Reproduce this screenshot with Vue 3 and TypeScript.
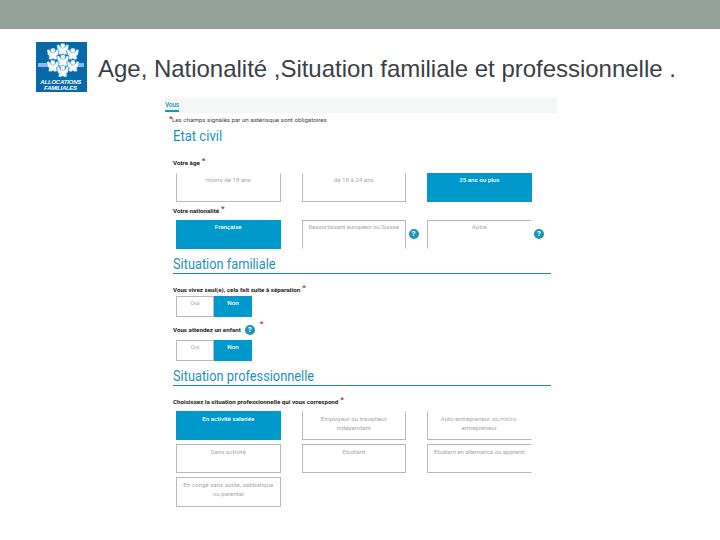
<script setup lang="ts">
interface Choice {
  label: string;
  active?: boolean;
  help?: boolean;
  // Sides of the outline that are not drawn, e.g. 'top right'.
  open?: string;
  // Long label squeezed onto a single line.
  tight?: boolean;
}

interface Question {
  label: string;
  // Space above the label line, and the height of the line itself.
  gap: number;
  height: number;
  help?: boolean;
  toggle?: boolean;
  roomy?: boolean;
  rows: Choice[][];
}

interface Section {
  title: string;
  ruled: boolean;
  questions: Question[];
}

const sections: Section[] = [
  {
    title: 'Etat civil',
    ruled: false,
    questions: [
      {
        label: 'Votre âge',
        gap: 5,
        height: 20,
        rows: [[
          { label: 'moins de 18 ans', open: 'top' },
          { label: 'de 18 à 24 ans', open: 'top' },
          { label: '25 ans ou plus', active: true },
        ]],
      },
      {
        label: 'Votre nationalité',
        gap: 0,
        height: 18,
        rows: [[
          { label: 'Française', active: true },
          { label: 'Ressortissant européen ou Suisse', open: 'bottom', help: true, tight: true },
          { label: 'Autre', open: 'bottom right', help: true },
        ]],
      },
    ],
  },
  {
    title: 'Situation familiale',
    ruled: true,
    questions: [
      {
        label: 'Vous vivez seul(e), cela fait suite à séparation',
        gap: 10,
        height: 12,
        toggle: true,
        rows: [[{ label: 'Oui' }, { label: 'Non', active: true }]],
      },
      {
        label: 'Vous attendez un enfant',
        gap: 2,
        height: 21,
        help: true,
        toggle: true,
        rows: [[{ label: 'Oui' }, { label: 'Non', active: true }]],
      },
    ],
  },
  {
    title: 'Situation professionnelle',
    ruled: true,
    questions: [
      {
        label: 'Choisissez la situation professionnelle qui vous correspond',
        gap: 7,
        height: 18,
        roomy: true,
        rows: [
          [
            { label: 'En activité salariée', active: true },
            { label: 'Employeur ou travailleur indépendant', open: 'top' },
            { label: 'Auto-entrepreneur ou micro-entrepreneur', open: 'top right' },
          ],
          [
            { label: 'Sans activité' },
            { label: 'Etudiant' },
            { label: 'Etudiant en alternance ou apprenti', open: 'right', tight: true },
          ],
          [{ label: 'En congé sans solde, sabbatique ou parental' }],
        ],
      },
    ],
  },
];

function choiceClasses(choice: Choice): string[] {
  const classes = (choice.open ?? '').split(' ').filter(Boolean).map((side) => `open-${side}`);
  if (choice.active) classes.push('active');
  if (choice.tight) classes.push('tight');
  return classes;
}

// Centres of the seven small figures of the logo: six around one.
const figures = [
  [26.8, 6.8],
  [17, 11.6],
  [36.8, 11.6],
  [16.8, 23.6],
  [37, 23.6],
  [26.8, 29],
  [26.9, 18],
];
</script>

<template>
  <div class="slide">
    <div class="band"></div>
    <header class="head">
      <svg class="logo" viewBox="0 0 51 50" role="img" aria-label="Allocations familiales">
        <rect width="51" height="50" fill="#0669a8" />
        <rect x="2" y="21" width="46" height="4" fill="#8db8ea" />
        <g fill="#f4fbff" stroke="#3f8cc0" stroke-width="0.35">
          <g v-for="([x, y], i) in figures" :key="i" :transform="`translate(${x} ${y}) scale(1.08)`">
            <path d="M-5.600-3.400L-3.600-4L-2.200-1.600H2.200L3.600-4L5.600-3.400L4.700 1.400L3.400 2L4 5L1.600 5.600L0 4.600L-1.600 5.600L-4 5L-3.400 2L-4.700 1.400Z" />
            <circle cx="0" cy="-2.900" r="2.300" />
          </g>
        </g>
        <g fill="#fff" font-family="Liberation Sans, sans-serif" font-weight="700" font-style="italic" font-size="6" text-anchor="middle">
          <text x="24.800" y="41.800" textLength="41">ALLOCATIONS</text>
          <text x="24.600" y="47.700" textLength="33">FAMILIALES</text>
        </g>
      </svg>
      <h1>Age, Nationalité ,Situation familiale et professionnelle .</h1>
    </header>

    <main class="form">
      <nav class="tabs"><span class="tab">Vous</span></nav>
      <p class="notice"><span class="star">*</span>Les champs signalés par un astérisque sont obligatoires</p>

      <section v-for="s in sections" :key="s.title" class="section" :class="{ ruled: s.ruled }">
        <h2><span>{{ s.title }}</span></h2>
        <div v-for="q in s.questions" :key="q.label" class="question">
          <div class="label" :style="{ marginTop: q.gap + 'px', height: q.height + 'px' }">
            <span>{{ q.label }}</span>
            <i v-if="q.help" class="help">?</i>
            <span class="star" :class="{ raised: q.help }">*</span>
          </div>
          <div v-for="(row, r) in q.rows" :key="r" class="row" :class="{ toggle: q.toggle, roomy: q.roomy }">
            <div v-for="c in row" :key="c.label" class="cell">
              <button type="button" class="choice" :class="choiceClasses(c)">{{ c.label }}</button>
              <i v-if="c.help" class="help">?</i>
            </div>
          </div>
        </div>
      </section>
    </main>
  </div>
</template>

<style>
body {
  background: #fff;
}
</style>

<style scoped>
.slide {
  width: 720px;
  height: 540px;
  overflow: hidden;
  background: #fff;
  font-family: Roboto, "Liberation Sans", sans-serif;
}
.band {
  height: 29px;
  box-sizing: border-box;
  background: #93a299;
  border-bottom: 1px solid #999d97;
}
.head {
  display: flex;
  height: 69px;
  padding: 13px 0 0 36px;
  box-sizing: border-box;
}
.logo {
  width: 51px;
  height: 50px;
  flex: none;
}
h1 {
  margin: 13px 0 0 11px;
  font: 400 24px/28px "Liberation Sans", Arial, sans-serif;
  letter-spacing: -0.02px;
  color: #3b3f44;
  white-space: nowrap;
}
.form {
  width: 392px;
  margin-left: 165px;
}
.tabs {
  display: flex;
  height: 15px;
  background: #f5f7f7;
}
.tab {
  width: 14px;
  height: 12px;
  border-bottom: 2px solid #1a94b8;
  font-size: 6.5px;
  font-weight: 500;
  letter-spacing: -0.2px;
  line-height: 14px;
  color: #1a94b8;
  white-space: nowrap;
}
.notice {
  display: flex;
  height: 13px;
  margin: 0 0 0 4px;
  font-size: 6.2px;
  line-height: 15px;
  color: #444;
  white-space: nowrap;
}
.star {
  color: #c4283c;
  font-size: 8px;
  font-weight: 700;
}
.notice .star {
  width: 3px;
  line-height: 11px;
}
.section {
  width: 378px;
  margin-left: 8px;
}
h2 {
  height: 22px;
  margin: 0;
  box-sizing: border-box;
  font-size: 14px;
  font-weight: 400;
  line-height: 21px;
  color: #1c93b8;
  white-space: nowrap;
}
/* Slightly condensed headings. */
h2 span {
  display: inline-block;
  transform: scaleX(0.935);
  transform-origin: left;
}
.ruled h2 {
  height: 25px;
  border-bottom: 1px solid #1f8aad;
  line-height: 31px;
}
.ruled h2 span {
  transform: scaleX(0.914);
}
.label {
  display: flex;
  align-items: center;
  font-size: 6.2px;
  font-weight: 700;
  color: #222;
  white-space: nowrap;
}
.label .star {
  height: 12px;
  margin: 0 0 4px 2px;
  line-height: 12px;
}
.label .star.raised {
  margin: 0 0 12px 5px;
}
.row {
  display: flex;
  gap: 21px;
  margin-left: 3px;
}
.row + .row {
  margin-top: 4px;
}
.row.toggle {
  gap: 0;
}
.cell {
  position: relative;
  width: 104.5px;
  height: 29px;
}
.toggle .cell {
  width: 38px;
  height: 21px;
}
.row + .row:last-child .cell {
  height: 30px;
}
.choice {
  display: flex;
  align-items: flex-start;
  justify-content: center;
  width: 100%;
  height: 100%;
  padding: 2px 5px 0;
  box-sizing: border-box;
  border: 1px solid #b8b8b8;
  background: #fff;
  font: 400 6.2px/9px Roboto, sans-serif;
  color: #aaa;
  text-align: center;
}
.roomy .choice {
  padding-top: 3px;
}
.choice.tight {
  letter-spacing: -0.1px;
  white-space: nowrap;
}
.choice.active {
  border-color: #0099cc;
  background: #0099cc;
  color: #fff;
  font-weight: 500;
}
.open-top {
  border-top-color: #fff;
}
.open-right {
  border-right-color: #fff;
}
.open-bottom {
  border-bottom-color: #fff;
}
.help {
  display: inline-block;
  width: 10px;
  height: 10px;
  margin-left: 4px;
  border-radius: 50%;
  background: #1a94b8;
  color: #fff;
  font: 700 8px/10px Roboto, sans-serif;
  text-align: center;
}
.cell .help {
  position: absolute;
  left: 103px;
  top: 9px;
}
</style>
